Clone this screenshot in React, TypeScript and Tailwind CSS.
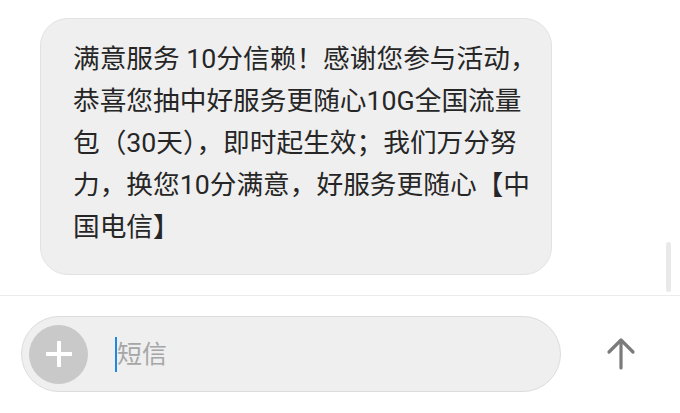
const lines = [
  "满意服务 10分信赖！感谢您参与活动，",
  "恭喜您抽中好服务更随心10G全国流量",
  "包（30天），即时起生效；我们万分努",
  "力，换您10分满意，好服务更随心【中",
  "国电信】",
];

export default function App() {
  return (
    <div
      className="w-[680px] h-[413px] bg-white flex flex-col overflow-hidden"
      style={{ fontFamily: 'Roboto, "Noto Sans CJK SC", sans-serif' }}
    >
      {/* messages */}
      <div className="relative h-[296px] shrink-0 border-b border-[#ececec]">
        <div className="ml-[40px] mt-[18px] w-[512px] rounded-[28px] border border-[#e2e2e2] bg-[#efefef] pl-[32px] pt-[19px] pb-[26px] text-[26.7px] leading-[42px] text-[#262626] [font-feature-settings:'chws']">
          {lines.map((l, i) => (
            <div key={i} className="whitespace-nowrap">
              {l}
            </div>
          ))}
        </div>
        {/* scrollbar */}
        <div className="absolute right-[9px] top-[242px] h-[50px] w-[5px] rounded-full bg-[#e9e9e9]" />
      </div>

      {/* input bar */}
      <div className="flex items-center pl-[21px] pt-[20px]">
        <div className="flex h-[76px] w-[540px] items-center rounded-full border border-[#dcdcdc] bg-[#efefef] pl-[7px]">
          <button className="flex h-[59px] w-[59px] items-center justify-center rounded-full bg-[#c9c9c9]">
            <svg width="26" height="26" viewBox="0 0 26 26">
              <path d="M13 1v24M1 13h24" stroke="#fff" strokeWidth="4" strokeLinecap="round" />
            </svg>
          </button>
          <div className="ml-[27px] flex items-center">
            <span className="h-[35px] w-[2px] bg-[#1e88e5]" />
            <span className="text-[25px] leading-none text-[#a6a6a6]">短信</span>
          </div>
        </div>
        <div className="ml-[45px] flex items-center">
          <svg width="30" height="34" viewBox="0 0 30 34">
            <path
              d="M15 31V3M3 15L15 3l12 12"
              fill="none"
              stroke="#7b7b7b"
              strokeWidth="3.2"
              strokeLinecap="round"
              strokeLinejoin="round"
            />
          </svg>
        </div>
      </div>
    </div>
  );
}
